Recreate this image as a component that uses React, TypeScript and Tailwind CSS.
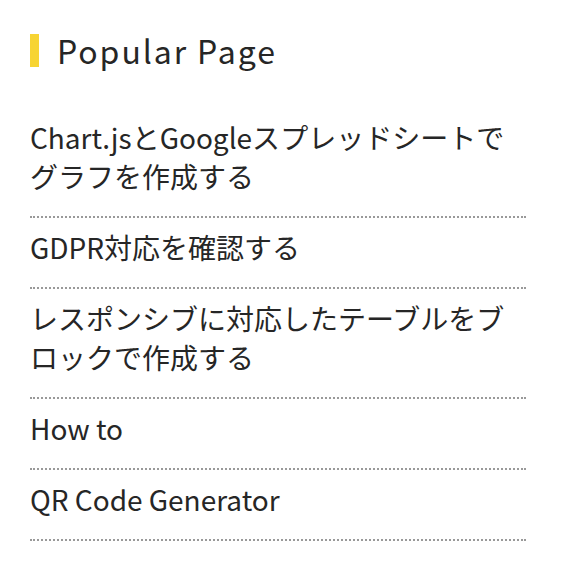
const pages = [
  "Chart.jsとGoogleスプレッドシートでグラフを作成する",
  "GDPR対応を確認する",
  "レスポンシブに対応したテーブルをブロックで作成する",
  "How to",
  "QR Code Generator",
];

export default function App() {
  return (
    <div className="min-h-screen bg-white pl-[30px] pr-[48px] pt-[34px] text-[#262626] font-['Noto_Sans_CJK_JP',sans-serif]">
      <h2 className="flex items-center gap-[18px]">
        <span className="h-[33px] w-[9px] bg-[#f7d433]" />
        <span className="text-[32px] leading-[33px] tracking-[0.06em]">Popular Page</span>
      </h2>
      <ul className="mt-[41px]">
        {pages.map((title) => (
          <li
            key={title}
            className="border-b-2 border-dotted border-[#999] pt-[10px] pb-[20px] text-[28px] leading-[39px]"
          >
            <a href="#">{title}</a>
          </li>
        ))}
      </ul>
    </div>
  );
}
